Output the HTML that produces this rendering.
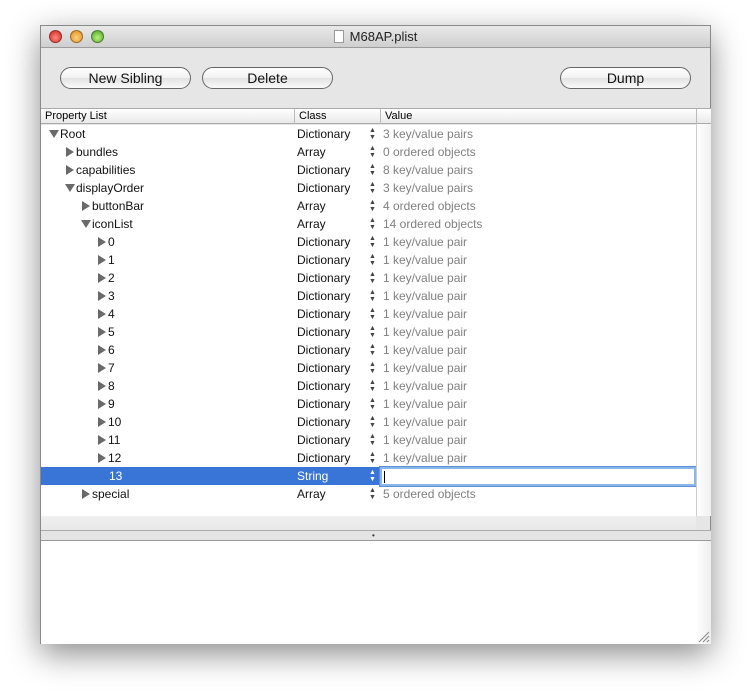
<!DOCTYPE html>
<html><head><meta charset="utf-8"><style>
*{margin:0;padding:0;box-sizing:border-box}
body{width:750px;height:699px;background:#fff;position:relative;overflow:hidden;font-family:"Liberation Sans",sans-serif;font-size:12px}
.win{position:absolute;left:40px;top:25px;width:671px;height:619px;background:#e6e6e6;border:1px solid #8a8a8a;box-shadow:0 10px 30px rgba(0,0,0,.45)}
.title{position:absolute;left:0;top:0;width:100%;height:22px;background:linear-gradient(#e9e9e9,#cfcfcf);border-bottom:1px solid #9c9c9c;text-align:center;font-size:13px;line-height:22px;color:#222}
.dot{position:absolute;top:4px;width:13px;height:13px;border-radius:50%;border:1px solid rgba(0,0,0,.35)}
.btn{position:absolute;top:41px;height:22px;border:1px solid #666;border-radius:11px;background:linear-gradient(#fff,#f2f2f2 50%,#e2e2e2 51%,#fafafa);text-align:center;font-size:14px;line-height:20px;color:#111}
.hdr{position:absolute;left:0;top:82px;width:670px;height:16px;background:linear-gradient(#fff,#e9e9e9);border-top:1px solid #aaa;border-bottom:1px solid #aaa;font-size:11px;line-height:14px}
.hdr span{position:absolute;top:0;border-left:1px solid #bbb;padding-left:4px;height:15px}
.tbl{position:absolute;left:0;top:99px;width:655px;height:391px;background:#fff}
.row{position:absolute;left:0;width:655px;height:18px;line-height:18px;font-size:12px;color:#111}
.row .n{position:absolute}
.row .c{position:absolute;left:256px}
.row .s{position:absolute;left:328px;top:2px;font-size:7px;line-height:7px;color:#444}
.row .v{position:absolute;left:342px;color:#808080}
.r,.d{display:inline-block;width:0;height:0;margin-right:1px}
.r{border-left:8px solid #6a6a6a;border-top:5px solid transparent;border-bottom:5px solid transparent;margin-left:1px;margin-right:2px;vertical-align:-1px}
.d{border-top:8px solid #6a6a6a;border-left:5px solid transparent;border-right:5px solid transparent;vertical-align:0}
.sel{background:#3875d7;color:#fff}
.sel .s{color:#fff}
.scr{position:absolute;left:655px;top:98px;width:15px;height:392px;background:linear-gradient(90deg,#fff,#f0f0f0);border-left:1px solid #ccc}
.gap{position:absolute;left:0;top:490px;width:655px;height:14px;background:linear-gradient(#f0f0f0,#e8e8e8)}
.div{position:absolute;left:0;top:504px;width:670px;height:11px;background:#e4e4e4;border-top:1px solid #aaa;border-bottom:1px solid #999}
.low{position:absolute;left:0;top:515px;width:655px;height:103px;background:#fff}
.lscr{position:absolute;left:655px;top:515px;width:15px;height:103px;background:linear-gradient(90deg,#fff,#eee)}
</style></head><body>
<div class="win">
 <div class="title"><div class="dot" style="left:8px;background:radial-gradient(circle at 50% 60%,#ff8a80,#d0201a)"></div><div class="dot" style="left:29px;background:radial-gradient(circle at 50% 60%,#ffd080,#e08a10)"></div><div class="dot" style="left:50px;background:radial-gradient(circle at 50% 60%,#b8f080,#4aa020)"></div><span style="display:inline-block;width:10px;height:13px;border:1px solid #999;background:#fff;vertical-align:-2px;margin-right:6px"></span>M68AP.plist</div>
 <div class="btn" style="left:19px;width:131px">New Sibling</div>
 <div class="btn" style="left:161px;width:131px">Delete</div>
 <div class="btn" style="left:519px;width:131px">Dump</div>
 <div class="hdr"><span style="left:0;border:0">Property List</span><span style="left:253px">Class</span><span style="left:339px">Value</span><span style="left:655px;width:15px"></span></div>
 <div class="tbl">
<div class="row" style="top:0"><span class="n" style="left:8px"><i class="d"></i>Root</span><span class="c">Dictionary</span><span class="s">▲<br>▼</span><span class="v">3 key/value pairs</span></div>
<div class="row" style="top:18px"><span class="n" style="left:24px"><i class="r"></i>bundles</span><span class="c">Array</span><span class="s">▲<br>▼</span><span class="v">0 ordered objects</span></div>
<div class="row" style="top:36px"><span class="n" style="left:24px"><i class="r"></i>capabilities</span><span class="c">Dictionary</span><span class="s">▲<br>▼</span><span class="v">8 key/value pairs</span></div>
<div class="row" style="top:54px"><span class="n" style="left:24px"><i class="d"></i>displayOrder</span><span class="c">Dictionary</span><span class="s">▲<br>▼</span><span class="v">3 key/value pairs</span></div>
<div class="row" style="top:72px"><span class="n" style="left:40px"><i class="r"></i>buttonBar</span><span class="c">Array</span><span class="s">▲<br>▼</span><span class="v">4 ordered objects</span></div>
<div class="row" style="top:90px"><span class="n" style="left:40px"><i class="d"></i>iconList</span><span class="c">Array</span><span class="s">▲<br>▼</span><span class="v">14 ordered objects</span></div>
<div class="row" style="top:108px"><span class="n" style="left:56px"><i class="r"></i>0</span><span class="c">Dictionary</span><span class="s">▲<br>▼</span><span class="v">1 key/value pair</span></div>
<div class="row" style="top:126px"><span class="n" style="left:56px"><i class="r"></i>1</span><span class="c">Dictionary</span><span class="s">▲<br>▼</span><span class="v">1 key/value pair</span></div>
<div class="row" style="top:144px"><span class="n" style="left:56px"><i class="r"></i>2</span><span class="c">Dictionary</span><span class="s">▲<br>▼</span><span class="v">1 key/value pair</span></div>
<div class="row" style="top:162px"><span class="n" style="left:56px"><i class="r"></i>3</span><span class="c">Dictionary</span><span class="s">▲<br>▼</span><span class="v">1 key/value pair</span></div>
<div class="row" style="top:180px"><span class="n" style="left:56px"><i class="r"></i>4</span><span class="c">Dictionary</span><span class="s">▲<br>▼</span><span class="v">1 key/value pair</span></div>
<div class="row" style="top:198px"><span class="n" style="left:56px"><i class="r"></i>5</span><span class="c">Dictionary</span><span class="s">▲<br>▼</span><span class="v">1 key/value pair</span></div>
<div class="row" style="top:216px"><span class="n" style="left:56px"><i class="r"></i>6</span><span class="c">Dictionary</span><span class="s">▲<br>▼</span><span class="v">1 key/value pair</span></div>
<div class="row" style="top:234px"><span class="n" style="left:56px"><i class="r"></i>7</span><span class="c">Dictionary</span><span class="s">▲<br>▼</span><span class="v">1 key/value pair</span></div>
<div class="row" style="top:252px"><span class="n" style="left:56px"><i class="r"></i>8</span><span class="c">Dictionary</span><span class="s">▲<br>▼</span><span class="v">1 key/value pair</span></div>
<div class="row" style="top:270px"><span class="n" style="left:56px"><i class="r"></i>9</span><span class="c">Dictionary</span><span class="s">▲<br>▼</span><span class="v">1 key/value pair</span></div>
<div class="row" style="top:288px"><span class="n" style="left:56px"><i class="r"></i>10</span><span class="c">Dictionary</span><span class="s">▲<br>▼</span><span class="v">1 key/value pair</span></div>
<div class="row" style="top:306px"><span class="n" style="left:56px"><i class="r"></i>11</span><span class="c">Dictionary</span><span class="s">▲<br>▼</span><span class="v">1 key/value pair</span></div>
<div class="row" style="top:324px"><span class="n" style="left:56px"><i class="r"></i>12</span><span class="c">Dictionary</span><span class="s">▲<br>▼</span><span class="v">1 key/value pair</span></div>
<div class="row sel" style="top:342px"><span class="n" style="left:68px">13</span><span class="c">String</span><span class="s">▲<br>▼</span><div style="position:absolute;left:339px;top:0;width:316px;height:19px;background:#fff;border:2px solid #8bb6ea;box-shadow:0 0 0 1px #5a8fd6"><div style="position:absolute;left:2px;top:2px;width:1px;height:12px;background:#000"></div></div></div>
<div class="row" style="top:360px"><span class="n" style="left:40px"><i class="r"></i>special</span><span class="c">Array</span><span class="s">▲<br>▼</span><span class="v">5 ordered objects</span></div>
 </div>
 <div class="scr"></div>
 <div class="gap"></div>
 <div class="div"><span style="position:absolute;left:331px;top:0;font-size:8px;color:#333">•</span></div>
 <div class="low"></div>
 <div class="lscr"></div>
 <svg style="position:absolute;left:657px;top:605px" width="12" height="12"><path d="M11 1L1 11M11 5L5 11M11 9L9 11" stroke="#888" stroke-width="1"/></svg>
</div>
</body></html>
